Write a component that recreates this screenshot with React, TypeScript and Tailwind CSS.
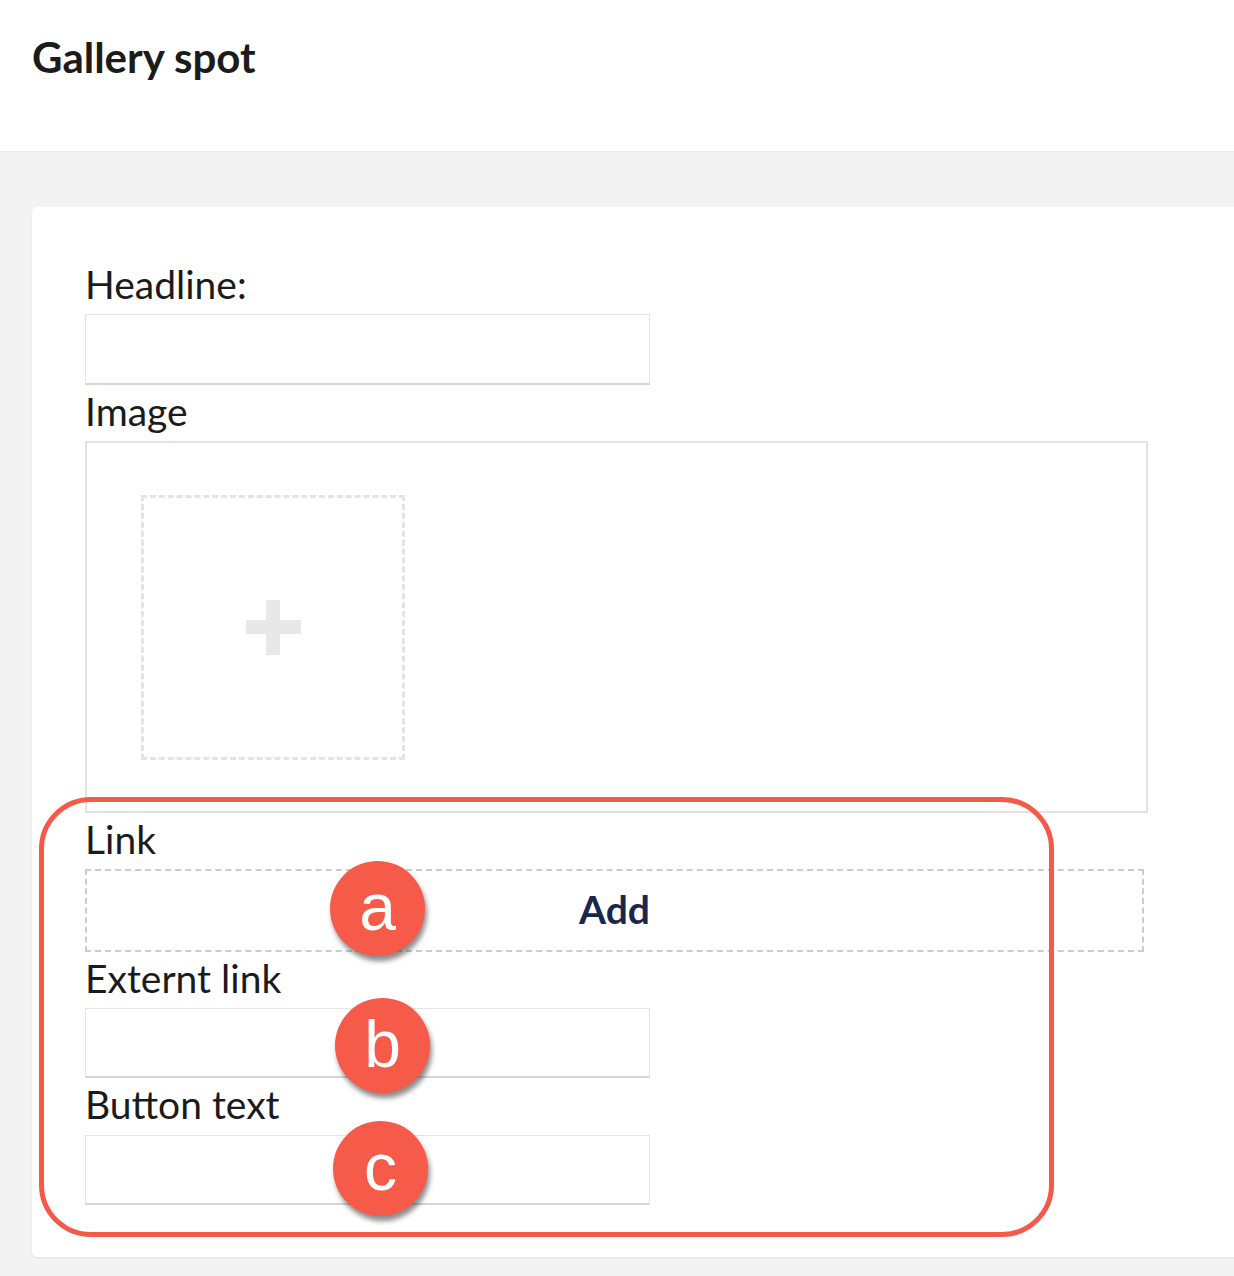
import React from 'react'

const inputCls =
  'w-[565px] bg-white border border-[#e4e4e4] border-b-2 border-b-[#d6d6d6]'

function Field({ label, gap, children }: { label: string; gap: string; children: React.ReactNode }) {
  return (
    <div className={`flex flex-col ${gap}`}>
      <label className="text-[39px] leading-[44px] text-[#1b1b1b]">{label}</label>
      {children}
    </div>
  )
}

function Badge({ letter, className }: { letter: string; className: string }) {
  return (
    <div
      className={`absolute w-[95px] h-[95px] rounded-full bg-[#f65a49] shadow-[2px_5px_5px_rgba(0,0,0,0.45)] flex items-center justify-center text-white text-[66px] leading-none ${className}`}
      style={{ fontFamily: '"Liberation Sans", Arial, sans-serif' }}
    >
      <span className="-mt-[4px]">{letter}</span>
    </div>
  )
}

export default function App() {
  return (
    <div
      className="w-[1234px] h-[1276px] overflow-hidden bg-[#f4f3f4]"
      style={{ fontFamily: 'Lato, "Open Sans", sans-serif' }}
    >
      {/* Header */}
      <div className="h-[152px] bg-white border-b border-[#ebebeb] pl-[32px] pt-[32px]">
        <h1 className="text-[42px] font-bold text-[#1b1b1b] leading-[1.2]">Gallery spot</h1>
      </div>

      <div className="pt-[55px] pl-[32px]">
        <div className="relative w-[1240px] bg-white rounded-[5px] shadow-[0_1px_2px_rgba(0,0,0,0.08)] pt-[55px] pb-[52px] pl-[53px] flex flex-col gap-[4px]">
          <Field label="Headline:" gap="gap-[8px]">
            <div className={`${inputCls} h-[71px]`} />
          </Field>

          <Field label="Image" gap="gap-[8px]">
            <div className="w-[1063px] h-[372px] border-2 border-[#e2e2e2] pt-[52px] pl-[54px]">
              <div className="w-[264px] h-[265px] border-[3px] border-dashed border-[#e4e4e4] flex items-center justify-center">
                <div className="relative w-[55px] h-[55px]">
                  <div className="absolute left-0 top-[20px] w-[55px] h-[14px] bg-[#e8e8e8]" />
                  <div className="absolute left-[20px] top-0 w-[14px] h-[55px] bg-[#e8e8e8]" />
                </div>
              </div>
            </div>
          </Field>

          <Field label="Link" gap="gap-[8px]">
            <div className="w-[1059px] h-[83px] border-2 border-dashed border-[#cccccc] flex items-center justify-center">
              <span className="text-[39px] font-bold text-[#1b264f] leading-none -mt-[2px]">Add</span>
            </div>
          </Field>

          <Field label="Externt link" gap="gap-[8px]">
            <div className={`${inputCls} h-[70px]`} />
          </Field>

          <Field label="Button text" gap="gap-[9px]">
            <div className={`${inputCls} h-[70px]`} />
          </Field>

          {/* Annotation overlay */}
          <div className="absolute left-[7px] top-[590px] w-[1015px] h-[440px] border-[5px] border-[#f4594a] rounded-[52px] pointer-events-none" />
          <Badge letter="a" className="left-[298px] top-[654px]" />
          <Badge letter="b" className="left-[303px] top-[791px]" />
          <Badge letter="c" className="left-[301px] top-[914px]" />
        </div>
      </div>
    </div>
  )
}
